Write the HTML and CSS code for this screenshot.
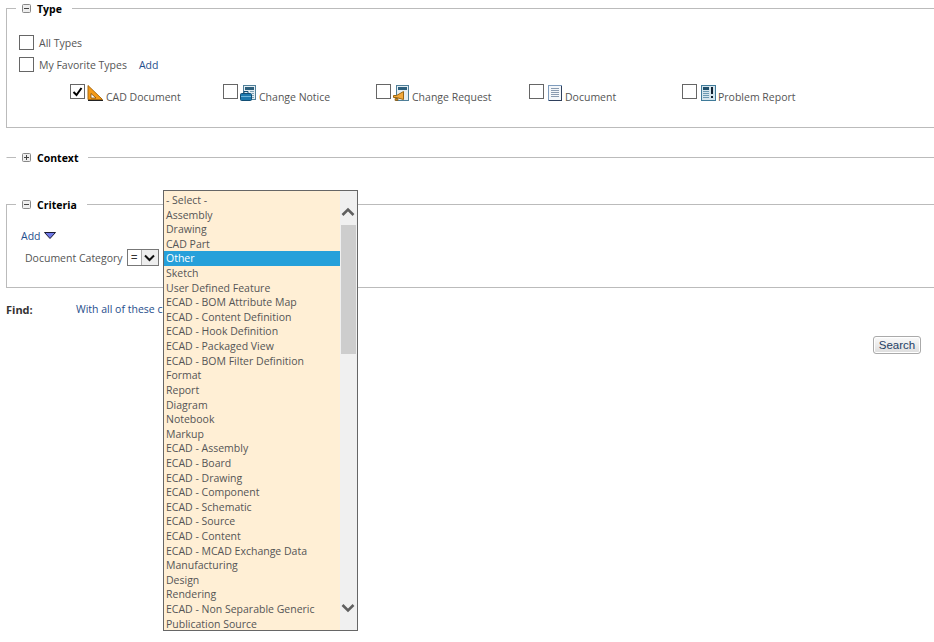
FILE: index.html
```html
<!DOCTYPE html>
<html lang="en">
<head>
    <meta charset="UTF-8">
    <meta name="viewport" content="width=device-width, initial-scale=1.0">
    <title>Search</title>
    <link rel="stylesheet" href="styles.css">
</head>
<body>
    <fieldset class="section type-section">
        <legend class="section-title">
            <svg class="toggle" width="9" height="9" viewBox="0 0 9 9"><rect x="0.5" y="0.5" width="8" height="8" rx="1" fill="#eee" stroke="#888"/><path d="M2 4.5h5" stroke="#444"/></svg>
            Type
        </legend>
        <div class="check-row">
            <span class="checkbox"></span>
            <span class="check-label">All Types</span>
        </div>
        <div class="check-row">
            <span class="checkbox"></span>
            <span class="check-label">My Favorite Types</span>
            <a class="link add-favorite">Add</a>
        </div>
        <div class="type-grid">
            <div class="type-item">
                <span class="checkbox">
                    <svg width="13" height="13" viewBox="0 0 13 13"><path d="M2.5 7l3 3 5-7" fill="none" stroke="#000" stroke-width="2"/></svg>
                </span>
                <svg class="type-icon" width="16" height="16" viewBox="0 0 16 16"><path d="M1 0.5L15.5 14.5H1z" fill="#f59a16" stroke="#a86a10"/><path d="M4 8.5L9 13H4z" fill="#fff" stroke="#7a4a06" stroke-width="0.8"/><path d="M1 15.5H16" stroke="#222"/></svg>
                <span class="type-label">CAD Document</span>
            </div>
            <div class="type-item">
                <span class="checkbox"></span>
                <svg class="type-icon" width="16" height="16" viewBox="0 0 16 16"><rect x="3.5" y="0.5" width="12" height="14" fill="#e4eef3" stroke="#4f7f99"/><rect x="5" y="2" width="9" height="3" fill="#2d5f7c"/><path d="M10 6.5h4M12 8.5h2M12 10.5h2M12 12.5h2" stroke="#7fa3b5"/><rect x="0.5" y="8.5" width="11" height="7" rx="1" fill="#1c78ad" stroke="#124e74"/><path d="M4 8.5V6.5h4v2" fill="none" stroke="#124e74"/><path d="M1 11.5h10" stroke="#6fb6dc"/></svg>
                <span class="type-label">Change Notice</span>
            </div>
            <div class="type-item">
                <span class="checkbox"></span>
                <svg class="type-icon" width="16" height="16" viewBox="0 0 16 16"><rect x="3.5" y="0.5" width="12" height="15" fill="#e4eef3" stroke="#4f7f99"/><rect x="5" y="2" width="9" height="3" fill="#2d5f7c"/><path d="M0.5 10.5h3l7-4v8l-7-2h-3z" fill="#f2a93b" stroke="#9a6510"/><path d="M2 13.5h3v2H2z" fill="#c9861c" stroke="#7a4f0c" stroke-width="0.6"/></svg>
                <span class="type-label">Change Request</span>
            </div>
            <div class="type-item">
                <span class="checkbox"></span>
                <svg class="type-icon doc-icon" width="14" height="16" viewBox="0 0 14 16"><rect x="0.5" y="0.5" width="13" height="15" fill="#f4f7fa" stroke="#7f9cbd"/><path d="M1 15.5h13M13.5 1v15" stroke="#2e3f5c"/><path d="M3 3.5h8M3 5.5h8M3 7.5h8M3 9.5h8M3 11.5h8" stroke="#8a9bb0"/></svg>
                <span class="type-label">Document</span>
            </div>
            <div class="type-item">
                <span class="checkbox"></span>
                <svg class="type-icon doc-icon problem-icon" width="15" height="16" viewBox="0 0 15 16"><rect x="0.5" y="0.5" width="14" height="15" fill="#d5e6ee" stroke="#3f7a99"/><rect x="2" y="2" width="6" height="3" fill="#1f4f6b"/><path d="M2 6.5h6M2 8.5h6M2 10.5h6M2 12.5h6" stroke="#6b9ab2"/><path d="M11 2v7" stroke="#123" stroke-width="2"/><rect x="10" y="11" width="2" height="2" fill="#123"/></svg>
                <span class="type-label">Problem Report</span>
            </div>
        </div>
    </fieldset>

    <fieldset class="section context-section">
        <legend class="section-title">
            <svg class="toggle" width="9" height="9" viewBox="0 0 9 9"><rect x="0.5" y="0.5" width="8" height="8" rx="1" fill="#eee" stroke="#888"/><path d="M2 4.5h5M4.5 2v5" stroke="#444"/></svg>
            Context
        </legend>
    </fieldset>

    <fieldset class="section criteria-section">
        <legend class="section-title">
            <svg class="toggle" width="9" height="9" viewBox="0 0 9 9"><rect x="0.5" y="0.5" width="8" height="8" rx="1" fill="#eee" stroke="#888"/><path d="M2 4.5h5" stroke="#444"/></svg>
            Criteria
        </legend>
        <div class="add-row">
            <a class="link">Add</a>
            <svg width="12" height="7" viewBox="0 0 12 7"><path d="M0.5 0.5h11L6 6.5z" fill="#6e78e8" stroke="#1a1a33"/></svg>
        </div>
        <div class="criteria-row">
            <span class="check-label">Document Category</span>
            <span class="operator">
                <span class="operator-value">=</span>
                <span class="operator-btn">
                    <svg width="11" height="8" viewBox="0 0 11 8"><path d="M1 1.5l4.5 4.5L10 1.5" fill="none" stroke="#111" stroke-width="2"/></svg>
                </span>
            </span>
        </div>
    </fieldset>

    <div class="find-row">
        <span class="find-label">Find:</span>
        <a class="link">With all of these criteria</a>
    </div>

    <div class="search-row">
        <button class="search-btn">Search</button>
    </div>

    <div class="dropdown">
        <ul class="dropdown-list">
            <li>- Select -</li>
            <li>Assembly</li>
            <li>Drawing</li>
            <li>CAD Part</li>
            <li class="selected">Other</li>
            <li>Sketch</li>
            <li>User Defined Feature</li>
            <li>ECAD - BOM Attribute Map</li>
            <li>ECAD - Content Definition</li>
            <li>ECAD - Hook Definition</li>
            <li>ECAD - Packaged View</li>
            <li>ECAD - BOM Filter Definition</li>
            <li>Format</li>
            <li>Report</li>
            <li>Diagram</li>
            <li>Notebook</li>
            <li>Markup</li>
            <li>ECAD - Assembly</li>
            <li>ECAD - Board</li>
            <li>ECAD - Drawing</li>
            <li>ECAD - Component</li>
            <li>ECAD - Schematic</li>
            <li>ECAD - Source</li>
            <li>ECAD - Content</li>
            <li>ECAD - MCAD Exchange Data</li>
            <li>Manufacturing</li>
            <li>Design</li>
            <li>Rendering</li>
            <li>ECAD - Non Separable Generic</li>
            <li>Publication Source</li>
        </ul>
        <div class="scrollbar">
            <svg class="scroll-arrow" width="14" height="10" viewBox="0 0 14 10"><path d="M1.5 8L7 2.5 12.5 8" fill="none" stroke="#606060" stroke-width="2.6"/></svg>
            <div class="scroll-thumb"></div>
            <svg class="scroll-arrow scroll-down" width="14" height="10" viewBox="0 0 14 10"><path d="M1.5 2L7 7.5 12.5 2" fill="none" stroke="#606060" stroke-width="2.6"/></svg>
        </div>
    </div>
</body>
</html>
```

FILE: styles.css
```css
html, body {
    overflow: hidden;
}
body {
    font-family: "Open Sans", "Noto Sans", sans-serif;
    font-size: 10.5px;
    color: #555;
    margin: 0;
    height: 642px;
    background-color: #fff;
    position: relative;
}
.section {
    margin: 0 0 0 6px;
    padding: 0;
    border: 1px solid #bbb;
    border-right: none;
    min-width: 0;
    box-sizing: border-box;
}
.section-title {
    display: flex;
    align-items: center;
    gap: 6px;
    margin-left: 9px;
    padding: 0 10px 0 6px;
    height: 17px;
    font-weight: bold;
    font-size: 10.5px;
    color: #000;
}
.link {
    color: #1f4e8c;
}
.type-section {
    padding-top: 18px;
    height: 128px;
}
.check-row {
    display: flex;
    align-items: center;
    gap: 5px;
    height: 15px;
    margin: 0 0 7px 12px;
}
.checkbox {
    display: flex;
    align-items: center;
    justify-content: center;
    flex: none;
    width: 13px;
    height: 13px;
    border: 1px solid #666;
    background-color: #fff;
}
.add-favorite {
    margin-left: 7px;
}
.type-grid {
    display: grid;
    grid-template-columns: repeat(5, 153px);
    margin: 12px 0 0 63px;
}
.type-item {
    display: flex;
    align-items: flex-start;
    height: 20px;
}
.type-icon {
    margin: 1px 3px 0 2px;
    flex: none;
}
.doc-icon {
    margin-left: 4px;
}
.problem-icon {
    margin-right: 2px;
}
.type-label {
    margin-top: 6px;
    line-height: 15px;
}
.context-section {
    margin-top: 21px;
    border-left-color: transparent;
    border-bottom: none;
    height: 17px;
}
.criteria-section {
    margin-top: 30px;
    height: 92px;
}
.add-row {
    display: flex;
    align-items: center;
    gap: 3px;
    margin: 15px 0 0 14px;
    height: 15px;
}
.criteria-row {
    display: flex;
    align-items: center;
    gap: 4px;
    margin: 6px 0 0 18px;
    height: 17px;
}
.operator {
    display: flex;
    width: 32px;
    height: 17px;
    box-sizing: border-box;
    border: 1px solid #777;
}
.operator-value {
    width: 13px;
    text-align: center;
    line-height: 15px;
    font-size: 12px;
    color: #333;
}
.operator-btn {
    flex: 1;
    display: flex;
    align-items: center;
    justify-content: center;
    background-color: #eee;
    border-left: 1px solid #aaa;
}
.find-row {
    display: flex;
    margin: 14px 0 0 6px;
    height: 15px;
    line-height: 15px;
}
.find-label {
    width: 70px;
    font-size: 11px;
    font-weight: bold;
    color: #333;
}
.search-row {
    display: flex;
    justify-content: flex-end;
    margin: 19px 13px 0 0;
}
.search-btn {
    width: 48px;
    height: 18px;
    padding: 0;
    font-family: "Liberation Sans", Arial, sans-serif;
    font-size: 11.5px;
    color: #1f3f66;
    border: 1px solid #aaa;
    border-radius: 3px;
    background: linear-gradient(#fafafa, #ddd);
    box-shadow: inset 0 0 0 1px #fff;
}
.dropdown {
    position: absolute;
    left: 163px;
    top: 190px;
    width: 195px;
    height: 441px;
    box-sizing: border-box;
    display: flex;
    border: 1px solid #666;
    background-color: #ffefd5;
    overflow: hidden;
}
.dropdown-list {
    flex: 1;
    list-style: none;
    margin: 0;
    padding: 2px 0 0;
    overflow: hidden;
}
.dropdown-list li {
    height: 14.62px;
    line-height: 14.62px;
    padding-left: 2px;
    white-space: nowrap;
}
.dropdown-list .selected {
    background-color: #26a0da;
    color: #fff;
}
.scrollbar {
    position: relative;
    flex: none;
    width: 17px;
    background-color: #f0f0f0;
}
.scroll-arrow {
    position: absolute;
    left: 1px;
    top: 16px;
}
.scroll-down {
    top: 412px;
}
.scroll-thumb {
    position: absolute;
    left: 1px;
    top: 34px;
    width: 15px;
    height: 129px;
    background-color: #cdcdcd;
}
```
